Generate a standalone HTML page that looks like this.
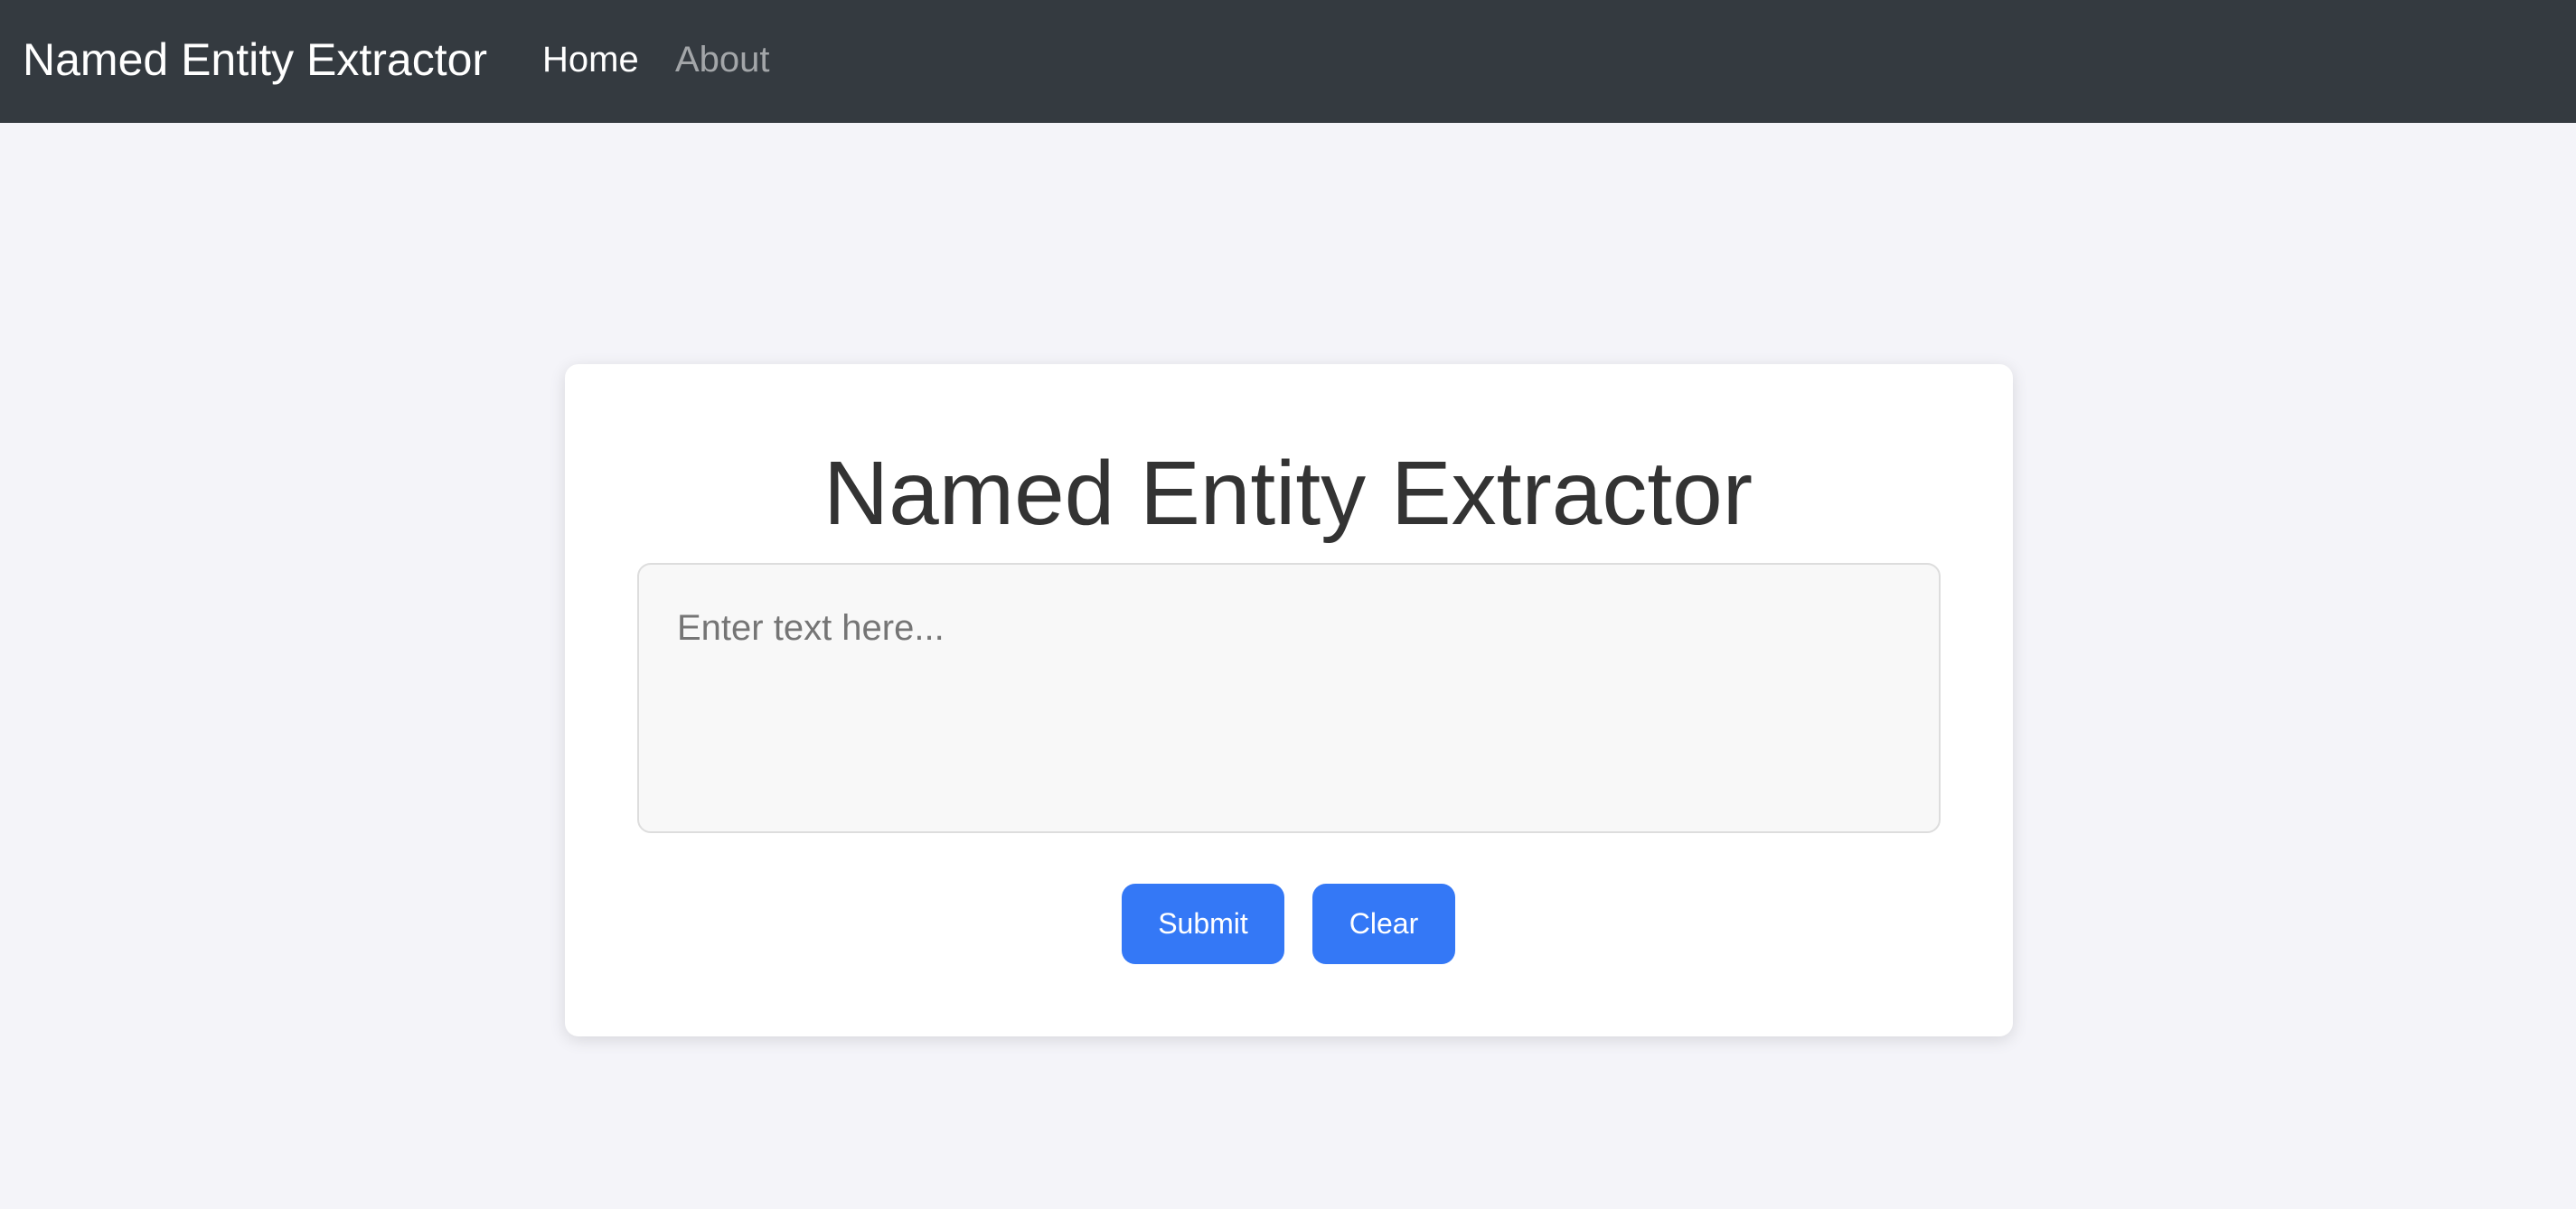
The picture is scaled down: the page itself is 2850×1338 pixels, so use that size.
<!DOCTYPE html>
<html><head><meta charset="utf-8"><style>
html,body{margin:0;padding:0;width:2850px;height:1338px;background:#f4f4f9;font-family:"Liberation Sans",Arial,sans-serif;overflow:hidden}
.nav{position:absolute;left:0;top:0;width:2850px;height:136px;background:#343a40}
.brand{position:absolute;left:25px;top:0;line-height:132px;font-size:50px;color:#fff}
.l1{position:absolute;left:600px;top:0;line-height:132px;font-size:40px;color:#fff}
.l2{position:absolute;left:747px;top:0;line-height:132px;font-size:40px;color:rgba(255,255,255,.55)}
.card{position:absolute;left:625px;top:403px;width:1602px;height:744px;background:#fff;border-radius:15px;box-shadow:0 4px 18px rgba(0,0,0,.12)}
h1{position:absolute;left:0;width:100%;top:481px;margin:0;text-align:center;font-weight:normal;font-size:100px;color:#333;line-height:130px}
.ta{position:absolute;left:705px;top:623px;width:1438px;height:295px;background:#f8f8f8;border:2px solid #ddd;border-radius:15px}
.ph{position:absolute;left:749px;top:673px;font-size:40px;color:#757575}
.btn{position:absolute;top:978px;height:89px;background:#3478f6;color:#fff;border-radius:15px;font-size:32px;line-height:89px;text-align:center}
</style></head><body>
<div class="nav"><div class="brand">Named Entity Extractor</div><div class="l1">Home</div><div class="l2">About</div></div>
<div class="card"></div>
<h1>Named Entity Extractor</h1>
<div class="ta"></div><div class="ph">Enter text here...</div>
<div class="btn" style="left:1241px;width:180px">Submit</div>
<div class="btn" style="left:1452px;width:158px">Clear</div>
</body></html>
